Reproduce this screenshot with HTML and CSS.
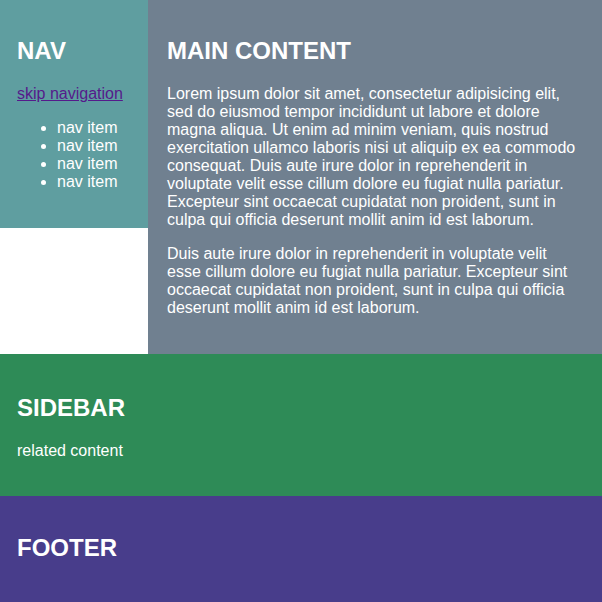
FILE: index.html
```html
<!DOCTYPE html>
<html lang="en">
<head>
<meta charset="utf-8">
<title>Layout</title>
<link rel="stylesheet" href="styles.css">
</head>
<body>
<div class="page">
  <nav class="nav">
    <h2>NAV</h2>
    <p><a href="#main">skip navigation</a></p>
    <ul>
      <li>nav item</li>
      <li>nav item</li>
      <li>nav item</li>
      <li>nav item</li>
    </ul>
  </nav>
  <main class="main" id="main">
    <h2>MAIN CONTENT</h2>
    <p>Lorem ipsum dolor sit amet, consectetur adipisicing elit, sed do eiusmod tempor incididunt ut labore et dolore magna aliqua. Ut enim ad minim veniam, quis nostrud exercitation ullamco laboris nisi ut aliquip ex ea commodo consequat. Duis aute irure dolor in reprehenderit in voluptate velit esse cillum dolore eu fugiat nulla pariatur. Excepteur sint occaecat cupidatat non proident, sunt in culpa qui officia deserunt mollit anim id est laborum.</p>
    <p>Duis aute irure dolor in reprehenderit in voluptate velit esse cillum dolore eu fugiat nulla pariatur. Excepteur sint occaecat cupidatat non proident, sunt in culpa qui officia deserunt mollit anim id est laborum.</p>
  </main>
  <aside class="sidebar">
    <h2>SIDEBAR</h2>
    <p>related content</p>
  </aside>
  <footer class="footer">
    <h2>FOOTER</h2>
  </footer>
</div>
</body>
</html>
```
FILE: styles.css
```css
html, body {
  margin: 0;
  padding: 0;
}
body {
  font-family: "Liberation Sans", Arial, sans-serif;
  font-size: 16px;
  color: #fff;
  background: #fff;
}
.page {
  display: grid;
  grid-template-columns: 148px 1fr;
  align-items: start;
}
h2 {
  font-size: 24px;
  margin: 17px 0 20px;
}
.nav {
  background: #5f9ea0;
  padding: 20px 16px 21px 17px;
}
.nav a {
  color: #551a8b;
}
.main {
  background: #708090;
  align-self: stretch;
  padding: 20px 20px 21px 19px;
}
.sidebar {
  grid-column: 1 / -1;
  background: #2e8b57;
  padding: 20px 17px;
}
.sidebar h2 {
  margin-top: 20px;
}
.footer {
  grid-column: 1 / -1;
  background: #483d8b;
  padding: 20px 17px;
}
.footer h2 {
  margin-top: 18px;
}
```
